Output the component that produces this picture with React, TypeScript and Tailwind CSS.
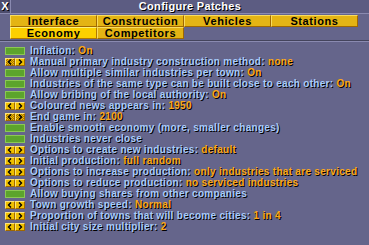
import React from 'react';

type Row = {
  label: string;
  value?: string;
  kind: 'bool' | 'arrows';
  leftOff?: boolean;
  rightOff?: boolean;
};

const ROWS: Row[] = [
  { label: 'Inflation: ', value: 'On', kind: 'bool' },
  { label: 'Manual primary industry construction method: ', value: 'none', kind: 'arrows', leftOff: true },
  { label: 'Allow multiple similar industries per town: ', value: 'On', kind: 'bool' },
  { label: 'Industries of the same type can be built close to each other: ', value: 'On', kind: 'bool' },
  { label: 'Allow bribing of the local authority: ', value: 'On', kind: 'bool' },
  { label: 'Coloured news appears in: ', value: '1950', kind: 'arrows' },
  { label: 'End game in: ', value: '2100', kind: 'arrows', leftOff: true, rightOff: true },
  { label: 'Enable smooth economy (more, smaller changes)', kind: 'bool' },
  { label: 'Industries never close', kind: 'bool' },
  { label: 'Options to create new industries: ', value: 'default', kind: 'arrows' },
  { label: 'Initial production: ', value: 'full random', kind: 'arrows' },
  { label: 'Options to increase production: ', value: 'only industries that are serviced', kind: 'arrows' },
  { label: 'Options to reduce production: ', value: 'no serviced industries', kind: 'arrows' },
  { label: 'Allow buying shares from other companies', kind: 'bool' },
  { label: 'Town growth speed: ', value: 'Normal', kind: 'arrows' },
  { label: 'Proportion of towns that will become cities: ', value: '1 in 4', kind: 'arrows' },
  { label: 'Initial city size multiplier: ', value: '2', kind: 'arrows' },
];

const font = "font-['Liberation_Sans',Arial,sans-serif] font-bold";

const Tab = ({ label, active }: { label: string; active?: boolean }) => (
  <div
    className={
      'w-[87px] h-[12px] flex items-center justify-center border-t border-l border-b border-r text-[11px] tracking-[0.6px] leading-none text-black ' +
      font +
      (active
        ? ' bg-[#fcd000] border-t-[#fcf07c] border-l-[#fcf07c] border-b-[#b07800] border-r-[#b07800]'
        : ' bg-[#e4b414] border-t-[#f8dc60] border-l-[#f8dc60] border-b-[#a06800] border-r-[#a06800]')
    }
  >
    {label}
  </div>
);

const Arrow = ({ dir, off }: { dir: '<' | '>'; off?: boolean }) => (
  <div
    className={
      'w-[10px] h-[8px] flex items-center justify-center border border-t-[#fce47c] border-l-[#fce47c] border-b-[#a06800] border-r-[#a06800] ' +
      (off
        ? 'bg-[repeating-conic-gradient(#a87000_0_25%,#f0c000_0_50%)] bg-[length:2px_2px]'
        : 'bg-[#f0c000]')
    }
  >
    <svg width="6" height="6" viewBox="0 0 6 6">
      {dir === '<' ? (
        <path d="M4 0.5 L1.5 3 L4 5.5" stroke="#000" strokeWidth="1.4" fill="none" />
      ) : (
        <path d="M2 0.5 L4.5 3 L2 5.5" stroke="#000" strokeWidth="1.4" fill="none" />
      )}
    </svg>
  </div>
);

export default function App() {
  return (
    <div className="w-[369px] h-[245px] bg-[#65658b] flex flex-col overflow-hidden">
      {/* title bar */}
      <div className="h-[14px] flex border-b border-[#8a8ab0]">
        <div className="w-[11px] h-full bg-[#4c4c6c] border-r border-[#8a8ab0] flex items-center justify-center">
          <span className={'text-white text-[11px] leading-none [text-shadow:1px_1px_0_#000] ' + font}>X</span>
        </div>
        <div className="flex-1 bg-[#5c5c82] flex items-center justify-center">
          <span className={'text-white text-[11px] leading-none tracking-[0.3px] [text-shadow:1px_1px_0_#000] ' + font}>
            Configure Patches
          </span>
        </div>
      </div>

      {/* tabs */}
      <div className="h-[27px] pl-[10px] pt-[1px] border-b border-[#44445c] flex flex-col">
        <div className="flex">
          <Tab label="Interface" />
          <Tab label="Construction" />
          <Tab label="Vehicles" />
          <Tab label="Stations" />
        </div>
        <div className="flex">
          <Tab label="Economy" active />
          <Tab label="Competitors" />
        </div>
      </div>
      <div className="h-px bg-[#8a8ab0]" />

      {/* settings list */}
      <div className="flex flex-col pt-[4px] pl-[5px]">
        {ROWS.map((r, i) => (
          <div key={i} className="h-[11px] flex items-start">
            <div className="w-[20px] h-[8px] mt-[1px] flex shrink-0">
              {r.kind === 'bool' ? (
                <div className="w-[20px] h-[8px] bg-[#5ca42c] border border-[#8cc854]" />
              ) : (
                <>
                  <Arrow dir="<" off={r.leftOff} />
                  <Arrow dir=">" off={r.rightOff} />
                </>
              )}
            </div>
            <div
              className={
                'ml-[5px] text-[10px] leading-[10px] whitespace-nowrap tracking-[0.3px] [text-shadow:1px_1px_0_#000] text-[#a8ccfc] ' +
                font
              }
            >
              {r.label}
              {r.value && <span className="text-[#fca818]">{r.value}</span>}
            </div>
          </div>
        ))}
      </div>
    </div>
  );
}
